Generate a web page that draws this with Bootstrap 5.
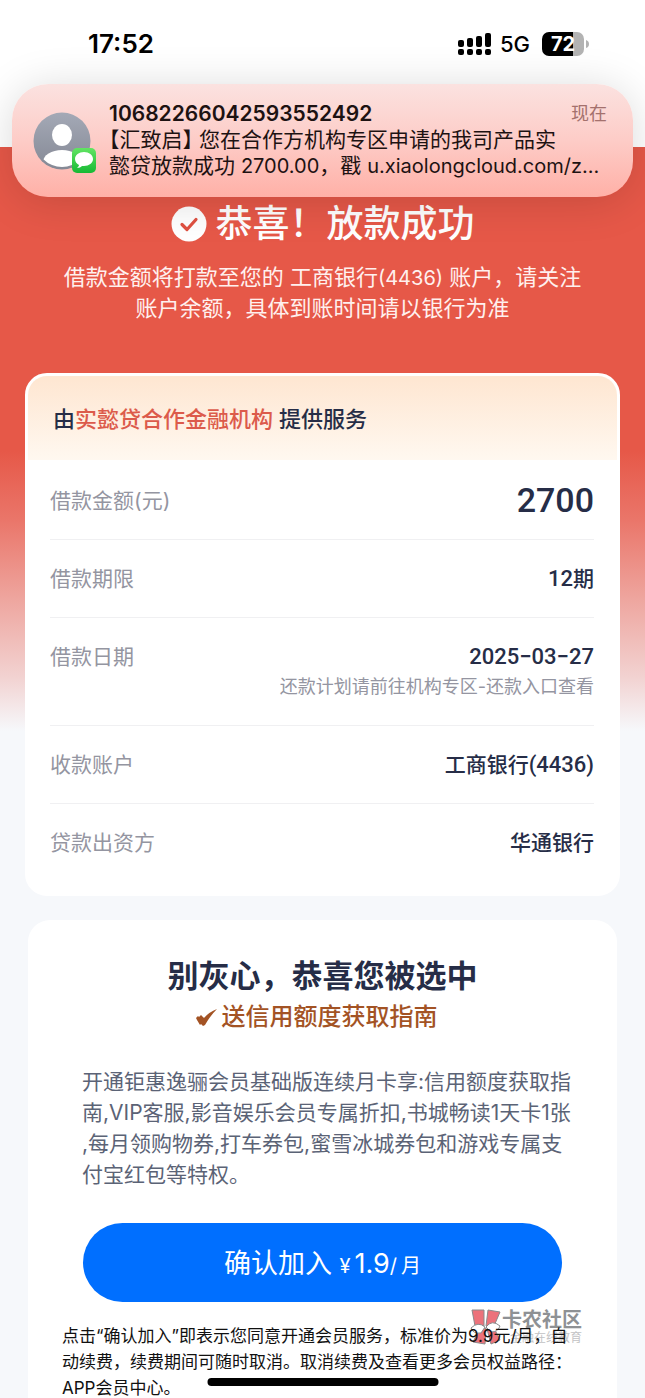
<!DOCTYPE html>
<html lang="zh-CN">
<head>
<meta charset="utf-8">
<meta name="viewport" content="width=device-width, initial-scale=1">
<title>放款成功</title>
<link href="https://cdn.jsdelivr.net/npm/bootstrap@5.3.0/dist/css/bootstrap.min.css" rel="stylesheet">
<style>
  body { font-family: Inter, "Noto Sans CJK SC", sans-serif; background: #f6f8fb; color: #262d47; }
  .top-area { height: 147px; padding: 26px 56px 0 88px; }
  .clock { font-size: 26px; line-height: 36px; font-weight: 600; color: #000; }
  .network { font-size: 22px; line-height: 36px; font-weight: 500; color: #000; }
  .latin { font-size: 20px; line-height: 1; }

  .notice { top: 84px; left: 12px; right: 12px; height: 113px; padding: 17px 26px 0 21px; border-radius: 36px;
    background: linear-gradient(#fbe2e0, #fdccc7 50%, #ffb0a7); color: #1d1212;
    box-shadow: 0 4px 44px rgba(0, 0, 0, .15); }
  .notice-text { font-size: 21px; line-height: 26px; min-width: 0; }
  .notice-time { font-size: 18px; line-height: 26px; color: #a4716d; }
  .half { font-feature-settings: "halt"; }
  .avatar { margin-top: 11px; }

  .page-main { background: linear-gradient(#e65848 0 52%, #ea766a 64%, #eea49d 77%, #f2d3d2 91%, #f6f8fb) no-repeat top / 100% 584px;
    padding: 53px 25px 0; }
  .hero-title { font-size: 37px; line-height: 48px; font-weight: 500; }
  .hero-sub { font-size: 22px; line-height: 31px; color: #fff0ee; margin: 14px 0 49px; }

  .loan { border: 3px solid #fff; border-radius: 22px; background: #fff; overflow: hidden; }
  .loan-head { height: 84px; padding: 0 25px; font-size: 22px; line-height: 86px; font-weight: 500;
    background: linear-gradient(#fee6d1, #fff8f0); }
  .brand { color: #dc5b4b; }
  .loan-rows { padding: 2px 23px 12px 22px; font-size: 21px; line-height: 31px; }
  .loan-row { padding: 23px 0; border-bottom: 1px solid #f0f0f2; }
  .loan-row:last-child { border-bottom: 0; }
  .loan-row dt { font-weight: 400; color: #9495a1; }
  .loan-row dd { font-family: Roboto, "Noto Sans CJK SC", sans-serif; font-weight: 500; font-size: 22px; margin: 0; text-align: right; }
  .loan-row .cjk { font-size: 21px; line-height: 1; }
  .loan-row .amount { font-size: 34px; }
  .loan-row .hint { font-family: Inter, "Noto Sans CJK SC", sans-serif; font-size: 18px; line-height: 30px; font-weight: 400; color: #9495a1; }

  .offer { margin: 24px 3px 0; border-radius: 22px 22px 0 0; background: #fff; padding: 36px 34px 0; }
  .offer-title { font-size: 31px; line-height: 40px; font-weight: 700; margin: 0; }
  .offer-sub { font-size: 24px; line-height: 40px; font-weight: 500; color: #a35324; margin: 1px 0 29px; padding-right: 12px; }
  .offer-body { font-size: 21px; line-height: 31px; color: #5b6376; margin: 0 -10px 33px 20px; white-space: nowrap; }
  .join { height: 79px; margin: 0 21px; padding-top: 10px; border-radius: 40px; background: #006fff; color: #fff; font-size: 27px; line-height: 40px; border: 0; }
  .join:hover { background: #0064e6; color: #fff; }
  .unit { font-size: 20px; }
  .terms { font-size: 17px; line-height: 26px; color: #111; margin: 21px -10px 0 0; }

  .stamp { top: -14px; right: 1px; opacity: .8; }
  .stamp-name { font-size: 20px; line-height: 22px; font-weight: 700; color: #73767a; }
  .stamp-line { font-size: 12px; line-height: 14px; color: #b4b4b6; }
  .home-bar { left: 50%; bottom: 12px; width: 231px; height: 8px; transform: translateX(-50%); background: #000; z-index: 2; }
</style>
</head>
<body>
<header class="top-area bg-white d-flex justify-content-between align-items-start">
  <span class="clock">17:52</span>
  <div class="d-flex align-items-center">
    <svg width="34" height="24" viewBox="0 0 34 24" aria-label="信号">
      <g fill="#000">
        <rect x="0" y="8" width="6" height="7" rx="2"/><rect x="9" y="6" width="6" height="9" rx="2"/>
        <rect x="18" y="4" width="6" height="11" rx="2"/><rect x="27" y="1" width="6" height="14" rx="2"/>
        <rect x="0" y="17" width="6" height="6" rx="2"/><rect x="9" y="17" width="6" height="6" rx="2"/>
        <rect x="18" y="17" width="6" height="6" rx="2"/><rect x="27" y="17" width="6" height="6" rx="2"/>
      </g>
    </svg>
    <span class="network ms-2 me-2 pe-1">5G</span>
    <svg width="47" height="24" viewBox="0 0 47 24" aria-label="电量 72%">
      <path d="M7 0H31V24H7a7 7 0 0 1-7-7V7a7 7 0 0 1 7-7z" fill="#000"/>
      <path d="M31 0H35a7 7 0 0 1 7 7V17a7 7 0 0 1-7 7H31z" fill="#b3b3b3"/>
      <path d="M44 8q3 1 3 4t-3 4z" fill="#b3b3b3"/>
      <text x="21" y="19" text-anchor="middle" font-size="20" font-weight="700" fill="#fff">72</text>
    </svg>
  </div>
</header>

<aside class="notice position-absolute d-flex">
  <svg class="avatar flex-shrink-0" width="64" height="63" viewBox="0 0 64 63" aria-hidden="true">
    <defs>
      <linearGradient id="face" x2="0" y2="1"><stop stop-color="#a4a9b6"/><stop offset="1" stop-color="#858995"/></linearGradient>
      <linearGradient id="msg" x2="0" y2="1"><stop stop-color="#62e463"/><stop offset="1" stop-color="#17b934"/></linearGradient>
      <clipPath id="disc"><circle cx="29" cy="29" r="26"/></clipPath>
    </defs>
    <circle cx="29" cy="29" r="28.5" fill="url(#face)"/>
    <ellipse cx="29" cy="23" rx="10" ry="11" fill="#fff"/>
    <ellipse cx="29" cy="50" rx="19" ry="12" fill="#fff" clip-path="url(#disc)"/>
    <rect x="39" y="36" width="24" height="25" rx="5" fill="url(#msg)"/>
    <path d="M51 40c-5 0-9 3-9 7 0 3 2 5 4 6 0 1-1 2-2 3 2 0 4-1 5-2h2c5 0 9-3 9-7s-4-7-9-7z" fill="#fff"/>
  </svg>
  <div class="notice-text flex-grow-1 ps-1 ms-2 text-nowrap">
    <div class="d-flex justify-content-between"><strong class="fw-semibold">10682266042593552492</strong><span class="notice-time">现在</span></div>
    <div><span class="half">【</span>汇致启<span class="half">】</span> 您在合作方机构专区申请的我司产品实</div>
    <div>懿贷放款成功 <span class="latin">2700.00</span>，戳 <span class="latin">u.xiaolongcloud.com/z...</span></div>
  </div>
</aside>

<main class="page-main">
  <div class="text-center text-white">
    <h1 class="hero-title m-0 d-flex justify-content-center align-items-center gap-2">
      <svg width="37" height="37" viewBox="0 0 37 37" aria-hidden="true"><circle cx="18" cy="18" r="17.5" fill="#fff"/><path d="M11 18.500l5 5 9-10" fill="none" stroke="#e05142" stroke-width="3.200" stroke-linecap="round" stroke-linejoin="round"/></svg>
      <span>恭喜！放款成功</span>
    </h1>
    <p class="hero-sub">借款金额将打款至您的 工商银行<span class="latin">(4436)</span> 账户，请关注<br>账户余额，具体到账时间请以银行为准</p>
  </div>

  <section class="loan">
    <div class="loan-head">由<span class="brand">实懿贷合作金融机构</span> 提供服务</div>
    <dl class="loan-rows m-0">
      <div class="loan-row d-flex justify-content-between"><dt>借款金额(元)</dt><dd class="amount">2700</dd></div>
      <div class="loan-row d-flex justify-content-between"><dt>借款期限</dt><dd>12<span class="cjk">期</span></dd></div>
      <div class="loan-row d-flex justify-content-between"><dt>借款日期</dt><dd>2025−03−27<div class="hint">还款计划请前往机构专区-还款入口查看</div></dd></div>
      <div class="loan-row d-flex justify-content-between"><dt>收款账户</dt><dd><span class="cjk">工商银行</span>(4436)</dd></div>
      <div class="loan-row d-flex justify-content-between"><dt>贷款出资方</dt><dd><span class="cjk">华通银行</span></dd></div>
    </dl>
  </section>

  <section class="offer">
    <h2 class="offer-title text-center">别灰心，恭喜您被选中</h2>
    <p class="offer-sub d-flex justify-content-center align-items-center">
      <svg class="me-1" width="22" height="20" viewBox="0 0 22 20" aria-hidden="true"><path d="M0 11L2 9 3 10 5 8L8 11Q13 5 21 2Q14 9 9 18L7 19 5 17 4 18 1 13z" fill="#a35324"/></svg>
      <span>送信用额度获取指南</span>
    </p>
    <p class="offer-body">开通钜惠逸骊会员基础版连续月卡享:信用额度获取指<br>南,VIP客服,影音娱乐会员专属折扣,书城畅读1天卡1张<br>,每月领购物券,打车券包,蜜雪冰城券包和游戏专属支<br>付宝红包等特权。</p>
    <div class="d-grid"><button type="button" class="btn join">确认加入 <span class="unit me-1">¥</span>1.9<span class="unit"><span class="me-1">/</span>月</span></button></div>
    <div class="position-relative">
      <div class="stamp position-absolute d-flex" aria-hidden="true">
        <svg width="32" height="36" viewBox="0 0 32 36"><g stroke="#6e6e70"><path d="M2 1h12v16H5z" fill="#e8505b"/><path d="M18 1l12 2-6 14h-8z" fill="#e8505b"/><path d="M3 33l6-12 7-2-1 16z" fill="#e8505b"/><path d="M17 20l7-1 6 12-9 4z" fill="#e8505b"/><path d="M1 19q7-7 14-1l-4 6q-8 1-10-5z" fill="#fff"/><path d="M16 18q6-8 14-1-2 6-9 6z" fill="#fff"/></g></svg>
        <div><div class="stamp-name">卡农社区</div><div class="stamp-line text-end">金融在线教育</div></div>
      </div>
      <p class="terms mb-0 position-relative">点击“确认加入”即表示您同意开通会员服务，标准价为9.9元/月，自<br>动续费，续费期间可随时取消。取消续费及查看更多会员权益路径：<br>APP会员中心。</p>
    </div>
  </section>
</main>
<div class="home-bar position-fixed rounded-pill"></div>
<script src="https://cdn.jsdelivr.net/npm/bootstrap@5.3.0/dist/js/bootstrap.bundle.min.js"></script>
</body>
</html>
